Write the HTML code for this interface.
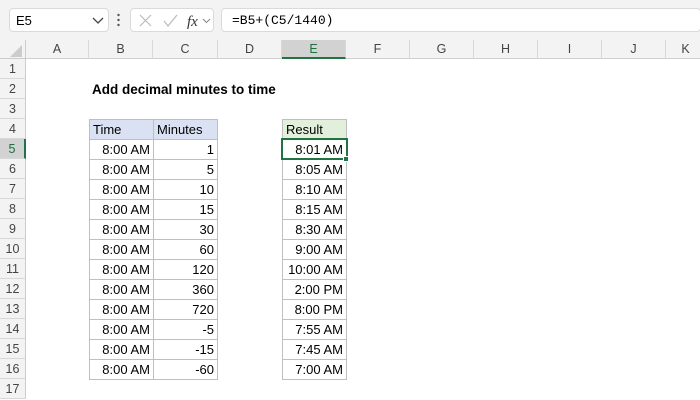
<!DOCTYPE html>
<html><head><style>
*{margin:0;padding:0;box-sizing:border-box}
body{width:700px;height:400px;overflow:hidden;background:#fff;font-family:"Liberation Sans",Calibri,sans-serif;font-size:13px;color:#000;position:relative}
.a{position:absolute}
.top{left:0;top:0;width:700px;height:40px;background:#f3f3f3}
.box{background:#fff;border:1px solid #dadada;border-radius:4px;height:24px;top:8px}
.colh{top:40px;height:19px;background:#f3f3f3;border-right:1px solid #d8d8d8;border-bottom:1px solid #d0d0d0;text-align:center;line-height:19px;color:#444;font-size:12.5px}
.rowh{left:0;width:26px;height:20px;background:#f3f3f3;border-bottom:1px solid #d8d8d8;border-right:1px solid #ccc;text-align:center;line-height:20px;color:#444;font-size:12.5px}
.c{height:21px;border:1px solid #bfbfbf;line-height:19px;padding:0 3px;text-align:right}
</style></head><body>
<div class="a top"></div>
<div class="a box" style="left:9px;width:100px"><span class="a" style="left:6px;top:4px;font-size:13px">E5</span><svg class="a" style="left:82px;top:8px" width="12" height="8"><path d="M1 1l5 5 5-5" stroke="#444" fill="none" stroke-width="1.3"/></svg></div>
<div class="a" style="left:117px;top:13px;width:3px;height:14px;color:#555"><svg width="3" height="14"><circle cx="1.5" cy="2" r="1.2" fill="#555"/><circle cx="1.5" cy="7" r="1.2" fill="#555"/><circle cx="1.5" cy="12" r="1.2" fill="#555"/></svg></div>
<div class="a box" style="left:130px;width:84px"><svg class="a" style="left:6px;top:4px" width="75" height="16"><path d="M3 2l11 11M14 2L3 13" stroke="#bbb" stroke-width="1.2"/><path d="M27 8l4 5 9-11" stroke="#bbb" stroke-width="1.2" fill="none"/><text x="50" y="13" font-family="Liberation Serif" font-style="italic" font-size="15" fill="#333">fx</text><path d="M66 6l3.5 3.5 3.5-3.5" stroke="#888" fill="none"/></svg></div>
<div class="a box" style="left:221px;width:480px"><span class="a" style="left:10px;top:4px;font-family:'Liberation Mono',monospace;font-size:13px">=B5+(C5/1440)</span></div>
<div class="a" style="left:0;top:40px;width:26px;height:19px;background:#f3f3f3;border-right:1px solid #ccc;border-bottom:1px solid #ccc"><svg class="a" style="left:10px;top:5px" width="12" height="12"><path d="M12 0V12H0Z" fill="#ccc"/></svg></div>
<div class="a colh" style="left:26px;width:63px">A</div>
<div class="a colh" style="left:89px;width:64px">B</div>
<div class="a colh" style="left:153px;width:65px">C</div>
<div class="a colh" style="left:218px;width:64px">D</div>
<div class="a colh" style="left:282px;width:64px;background:#d2d2d2;border-bottom:2px solid #217346;color:#1e6e3e">E</div>
<div class="a colh" style="left:346px;width:64px">F</div>
<div class="a colh" style="left:410px;width:64px">G</div>
<div class="a colh" style="left:474px;width:64px">H</div>
<div class="a colh" style="left:538px;width:64px">I</div>
<div class="a colh" style="left:602px;width:64px">J</div>
<div class="a colh" style="left:666px;width:40px">K</div>
<div class="a rowh" style="top:59px">1</div>
<div class="a rowh" style="top:79px">2</div>
<div class="a rowh" style="top:99px">3</div>
<div class="a rowh" style="top:119px">4</div>
<div class="a rowh" style="top:139px;background:#d2d2d2;border-right:2px solid #217346;color:#1e6e3e">5</div>
<div class="a rowh" style="top:159px">6</div>
<div class="a rowh" style="top:179px">7</div>
<div class="a rowh" style="top:199px">8</div>
<div class="a rowh" style="top:219px">9</div>
<div class="a rowh" style="top:239px">10</div>
<div class="a rowh" style="top:259px">11</div>
<div class="a rowh" style="top:279px">12</div>
<div class="a rowh" style="top:299px">13</div>
<div class="a rowh" style="top:319px">14</div>
<div class="a rowh" style="top:339px">15</div>
<div class="a rowh" style="top:359px">16</div>
<div class="a rowh" style="top:379px">17</div>
<div class="a" style="left:92px;top:82px;font-weight:bold;font-size:13.5px">Add decimal minutes to time</div>
<div class="a c" style="left:89px;top:119px;width:65px;background:#d9e1f2;text-align:left">Time</div>
<div class="a c" style="left:153px;top:119px;width:65px;background:#d9e1f2;text-align:left">Minutes</div>
<div class="a c" style="left:282px;top:119px;width:65px;background:#e2efda;text-align:left">Result</div>
<div id="rows"></div>
<script>
var m=[1,5,10,15,30,60,120,360,720,-5,-15,-60],r=["8:01 AM","8:05 AM","8:10 AM","8:15 AM","8:30 AM","9:00 AM","10:00 AM","2:00 PM","8:00 PM","7:55 AM","7:45 AM","7:00 AM"],h="";
for(var i=0;i<12;i++){var t=139+i*20;
h+='<div class="a c" style="left:89px;top:'+t+'px;width:65px">8:00 AM</div><div class="a c" style="left:153px;top:'+t+'px;width:65px">'+m[i]+'</div><div class="a c" style="left:282px;top:'+t+'px;width:65px">'+r[i]+'</div>';}
document.getElementById('rows').outerHTML=h;
</script>
<div class="a" style="left:281px;top:138px;width:67px;height:22px;border:2px solid #217346"></div>
<div class="a" style="left:343px;top:156px;width:6px;height:6px;background:#217346;border:1px solid #fff"></div>
</body></html>
